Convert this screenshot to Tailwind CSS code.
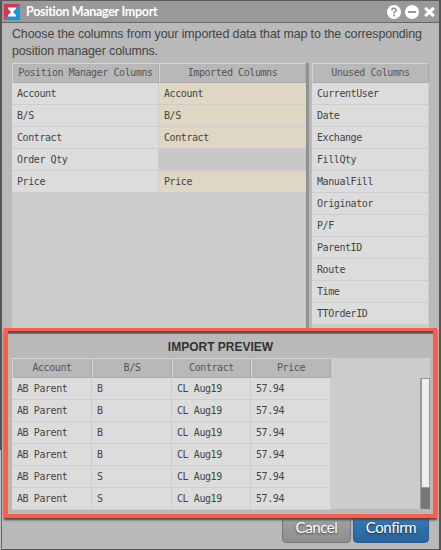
<!DOCTYPE html>
<html lang="en"><head><meta charset="utf-8"><title>Position Manager Import</title>
<script src="https://cdn.jsdelivr.net/npm/@tailwindcss/browser@4"></script></head>
<body class="w-[441px] h-[550px] overflow-hidden bg-[#555557]">
<div class="relative flex h-[550px] w-[441px] flex-col border-x-2 border-y border-t-[#5d5d5d] border-r-[#555555] border-b-[#565656] border-l-[#555557] bg-[#b9b9b9] text-[#444444]">
  <header class="flex h-[22px] shrink-0 items-center border-b border-[#666666] bg-[#999999] pl-[2px] pr-[3px]">
    <svg class="mt-px h-4 w-4 shrink-0" viewBox="0 0 16 16"><path fill="#d9364f" d="M0 0h16L0 16z"/><path fill="#0c9bdc" d="M16 0v16H0z"/><path fill="#fff" d="M4 3.5h8v2H11L9.2 8l1.8 2.5h1v2H4v-2h1L6.8 8 5 5.5H4z"/></svg>
    <h1 class="ml-[6px] mt-px whitespace-nowrap font-['Lato',sans-serif] text-[12.5px] font-bold leading-5 tracking-[-0.29px] text-white">Position Manager Import</h1>
    <div class="ml-auto flex items-center gap-1">
      <svg class="h-[14px] w-[14px]" viewBox="0 0 14 14"><circle cx="7" cy="7" r="7" fill="#fff"/><path d="M4.8 5.4C4.8 2.8 9.2 2.8 9.2 5.3C9.2 6.8 7 6.8 7 8.5" fill="none" stroke="#999" stroke-width="1.7"/><rect x="6.1" y="9.5" width="1.8" height="1.8" fill="#999"/></svg>
      <svg class="h-[14px] w-[14px]" viewBox="0 0 14 14"><circle cx="7" cy="7" r="7" fill="#fff"/><path d="M3 7h8" stroke="#999" stroke-width="2"/></svg>
      <svg class="h-[13px] w-[13px]" viewBox="0 0 13 13"><path d="M2.2 2.8l8.6 8.4M10.8 2.8L2.2 11.2" stroke="#fff" stroke-width="3.2"/></svg>
    </div>
  </header>
  <p class="h-[40px] shrink-0 whitespace-nowrap pl-[10px] pt-[3px] font-['Liberation_Sans',sans-serif] text-[12.4px] leading-[17px] tracking-[-0.085px]">Choose the columns from your imported data that map to the corresponding<br>position manager columns.</p>
  <main class="ml-[10px] flex h-[265px] w-[417px] shrink-0 bg-[#cccccc] font-['DejaVu_Sans_Mono',monospace] text-[10px] tracking-[-0.42px]">
    <div id="mapping" class="grid w-[294px] grid-cols-[147px_147px] content-start"></div>
    <div class="w-[3px] bg-[#919191]"></div><div class="w-[3px] bg-[#b9b9b9]"></div>
    <div id="unused" class="w-[117px]"></div>
  </main>
  <div class="flex h-[221px] shrink-0 justify-end gap-[2px] pr-[10px] pt-[184px] font-['Lato',sans-serif] text-[15px] tracking-[-0.4px] text-white">
    <button class="h-[31px] w-[69px] rounded-[4px] border border-[#777777] bg-linear-to-b from-[#a5a5a5] to-[#8e8e8e] [text-shadow:0_1px_2px_#444]">Cancel</button>
    <button class="h-[31px] w-[76px] rounded-[4px] border border-[#2c5f8f] bg-linear-to-b from-[#397fbb] to-[#28649b] [text-shadow:0_1px_2px_#123]">Confirm</button>
  </div>
  <section class="absolute left-[2px] top-[327px] h-[190px] w-[433px] border-4 border-t-[3px] border-[#ff5b4b] bg-[#b9b9b9] shadow-[0_2px_2px_#444]">
    <div class="h-[3px] bg-linear-to-b from-[#444446] to-[#777777]"></div>
    <h2 class="h-[24px] pt-[5px] text-center font-['Liberation_Sans',sans-serif] text-[12px] font-bold leading-[17px] text-[#333333]">IMPORT PREVIEW</h2>
    <div class="ml-1 flex h-[151px] w-[418px] bg-[#cccccc] font-['DejaVu_Sans_Mono',monospace] text-[10px] tracking-[-0.42px]">
      <div id="preview" class="grid grid-cols-[80px_80px_79px_80px] content-start"></div>
      <div class="ml-auto mt-5 flex w-[10px] flex-col border-l border-[#999999] bg-[#777777]"><div class="h-[110px] border border-[#999999] bg-[#eeeeee]"></div></div>
    </div>
  </section>
  <div class="absolute -left-[2px] top-[449px] h-[100px] w-[2px] border-r border-[#666666] bg-[#c0c0c0]"></div>
</div>
<script>
const head='h-5 border border-t-[#d6d6d6] border-l-[#d6d6d6] border-r-[#aaaaaa] border-b-[#aaaaaa] bg-[#b8b8b8] text-center leading-[18px] text-[#555555]';
const cell='h-[22px] border-b border-r border-[#cdcdcd] bg-[#dcdcdc] pl-[5px] leading-[21px] whitespace-pre';
const warm='h-[22px] border-b border-[#cdcdcd] bg-[#dfd6c4] pl-[5px] leading-[21px]';
const blank='h-[22px] border-b border-[#cdcdcd] bg-[#c7c7c7]';
const add=(id,c,t)=>{const d=document.createElement('div');d.className=c;d.textContent=t;document.getElementById(id).append(d)};
add('mapping',head,'Position Manager Columns');add('mapping',head,'Imported Columns');
['Account','B/S','Contract','Order Qty','Price'].forEach(t=>{add('mapping',cell,t);t==='Order Qty'?add('mapping',blank,''):add('mapping',warm,t)});
add('unused',head,'Unused Columns');
['CurrentUser','Date','Exchange','FillQty','ManualFill','Originator','P/F','ParentID','Route','Time','TTOrderID'].forEach(t=>add('unused',cell,t));
['Account','B/S','Contract','Price'].forEach(t=>add('preview',head,t));
['B','B','B','B','S','S'].forEach(s=>['AB Parent',s,'CL Aug19','57.94'].forEach(t=>add('preview',cell,t)));
</script>
</body></html>
